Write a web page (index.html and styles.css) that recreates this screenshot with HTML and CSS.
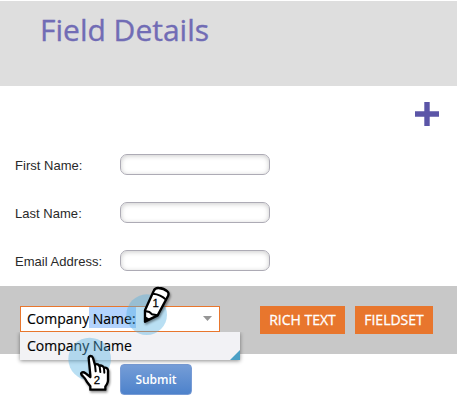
FILE: index.html
```html
<!DOCTYPE html>
<html lang="en">
<head>
<meta charset="utf-8">
<title>Field Details</title>
<link rel="stylesheet" href="styles.css">
</head>
<body>
<header class="header"><h1 class="title">Field Details</h1></header>
<main>
  <div class="toolbar">
    <svg class="plus" viewBox="0 0 24 24"><path d="M9.3 0h5.4v9.3H24v5.4h-9.3V24H9.3v-9.3H0V9.3h9.3z"/></svg>
  </div>
  <form class="form">
    <label class="row"><span class="label">First Name:</span><input class="field" type="text"></label>
    <label class="row"><span class="label">Last Name:</span><input class="field" type="text"></label>
    <label class="row"><span class="label">Email Address:</span><input class="field" type="text"></label>
  </form>
  <section class="bar">
    <div class="combo">
      <div class="combo-text"><span class="typed">Company</span><span class="selected"> Name:</span></div>
      <svg class="arrow" viewBox="0 0 9 5"><path d="M0 0h9L4.5 5z"/></svg>
      <div class="menu"><span class="option">Company Name</span><i class="corner"></i></div>
    </div>
    <button class="action rich">RICH TEXT</button>
    <button class="action fieldset">FIELDSET</button>
  </section>
  <div class="footer"><button class="submit">Submit</button></div>
</main>
<svg class="marker pencil" viewBox="0 0 165 165">
  <circle cx="65" cy="104" r="61"/>
  <g class="drawn">
    <path class="ink" d="M60 91L86 33Q90 23 101 24Q117 25 127 34Q133 39 129 48L98 106L60 125Z"/>
    <path class="line" d="M60 93L73 96L81 103L97 106M84 41Q107 43 123 59"/>
    <path class="solid" d="M58 107L76 118L58 127Z"/>
  </g>
  <text x="92" y="80">1</text>
</svg>
<svg class="marker hand" viewBox="0 0 180 180">
  <circle cx="74" cy="57" r="64"/>
  <g class="drawn">
    <path class="ink" d="M71 54Q72 48 77 48Q82 48 84 54L90 75Q92 71 98 73Q102 75 104 79Q106 75 112 78Q116 80 117 84Q121 81 126 85Q130 89 129 96L129 121Q129 127 126 132L121 140V149H76V139L66 126Q62 116 53 108Q47 103 49 99Q54 94 62 100L76 111L76 105Z"/>
    <path class="line" d="M90 75L92 94M104 79L106 96M117 84L118 98"/>
  </g>
  <text x="96" y="132">2</text>
</svg>
</body>
</html>
```
FILE: styles.css
```css
* { box-sizing: border-box; }
body {
  margin: 0;
  width: 457px;
  height: 418px;
  overflow: hidden;
  position: relative;
  background: #fff;
  font-family: "Open Sans", sans-serif;
}
html { overflow: hidden; background: #fff; }
.header {
  margin-top: 1px;
  width: 457px;
  height: 85px;
  background: #dedede;
  padding: 8px 0 0 40px;
  display: flow-root;
}
.title {
  margin: 0;
  font-size: 30px;
  line-height: 42px;
  font-weight: 400;
  color: #716cb5;
  -webkit-text-stroke: .35px #716cb5;
}
.toolbar {
  height: 68px;
  padding: 16px 18px 0 0;
  display: flex;
  justify-content: flex-end;
}
.plus { width: 24px; height: 24px; fill: #5b55a7; }
.form {
  margin: 0;
  height: 132px;
  padding-left: 15px;
  display: flex;
  flex-direction: column;
  gap: 27px;
}
.row { display: flex; height: 21px; align-items: center; }
.label {
  width: 105px;
  padding-top: 2px;
  font: 13px/17px "Liberation Sans", sans-serif;
  letter-spacing: .03px;
  color: #292929;
}
.field {
  width: 150px;
  height: 21px;
  border: 1px solid #adabb5;
  border-radius: 7px;
  background: #fff;
  box-shadow: inset 0 1px 5px #ccc;
  padding: 0 6px;
}
.bar {
  height: 68px;
  background: #c8c8c8;
  padding: 20px 0 0 20px;
  display: flex;
  align-items: flex-start;
}
.combo {
  position: relative;
  width: 200px;
  height: 26px;
  border: 1px solid #e8762d;
  background: #fff;
  padding: 0 7px 0 6px;
  display: flex;
  justify-content: space-between;
}
.combo-text {
  font-size: 14px;
  line-height: 24px;
  white-space: pre;
  color: #000;
  -webkit-text-stroke: .15px #000;
}
.selected {
  display: inline-block;
  height: 21px;
  background: #b3d3fd;
}
.arrow { width: 9px; height: 5px; margin-top: 9px; fill: #969696; }
.menu {
  position: absolute;
  top: 25px;
  left: -1px;
  width: 220px;
  height: 28px;
  padding-left: 7px;
  background: #f2f2f5;
  box-shadow: 0 1px 4px rgba(0, 0, 0, .45);
  clip-path: inset(0 -6px -6px -6px);
}
.option {
  font-size: 14px;
  line-height: 28px;
  color: #000;
  -webkit-text-stroke: .15px #000;
}
.corner {
  position: absolute;
  right: 0;
  bottom: 0;
  width: 10px;
  height: 10px;
  background: #4ba0c5;
  clip-path: polygon(100% 0, 100% 100%, 0 100%);
}
.action {
  height: 28px;
  border: 0;
  padding: 0;
  background: #e8762d;
  color: #fff;
  font: 14px/28px "Open Sans", sans-serif;
  -webkit-text-stroke: .3px #fff;
}
.rich { width: 85px; margin-left: 40px; }
.fieldset { width: 78px; margin-left: 10px; }
.footer { padding: 10px 0 0 120px; }
.submit {
  display: block;
  width: 72px;
  height: 31px;
  padding: 0;
  border: 1px solid #779bd5;
  border-radius: 4px;
  background: linear-gradient(#759dd7, #4d82cb);
  color: #fff;
  font: 600 12px/28px "Open Sans", sans-serif;
}
.marker { position: absolute; overflow: visible; pointer-events: none; }
.pencil { left: 125px; top: 280px; width: 55px; height: 55px; }
.hand { left: 65px; top: 340px; width: 60px; height: 60px; }
.marker circle { fill: #51afe2; fill-opacity: .4; }
.drawn { filter: drop-shadow(3px 5px 3px rgba(0, 0, 0, .45)); }
.ink { fill: #fff; stroke: #000; stroke-width: 7; stroke-linejoin: round; }
.line { fill: none; stroke: #000; stroke-width: 6; stroke-linecap: round; }
.solid { fill: #000; }
.marker text {
  font: 34px "Liberation Sans", sans-serif;
  text-anchor: middle;
  fill: #000;
  stroke: #000;
  stroke-width: .8;
}
```
